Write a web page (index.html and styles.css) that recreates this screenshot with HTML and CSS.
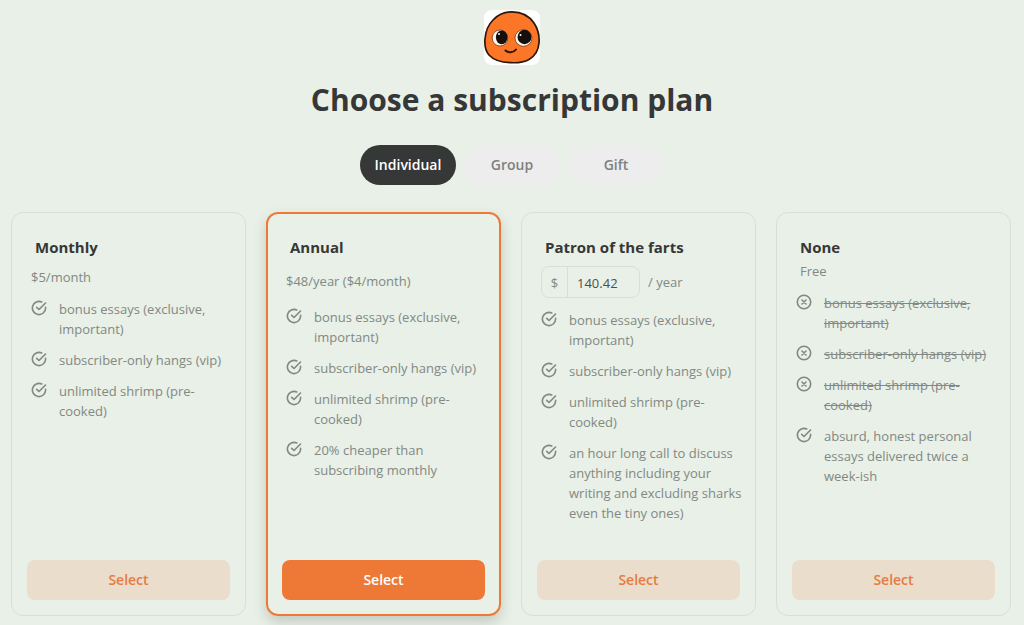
FILE: index.html
```
<!DOCTYPE html>
<html lang="en">
<head>
<meta charset="utf-8">
<meta name="viewport" content="width=device-width, initial-scale=1">
<title>Choose a subscription plan</title>
<link rel="stylesheet" href="styles.css">
</head>
<body>
<svg width="0" height="0" class="sprite" aria-hidden="true">
  <symbol id="check" viewBox="0 0 16 16"><path d="M14.600 7.300V8A6.600 6.600 0 1 1 10.800 2M14.500 3 8 9.500 5.700 7.300"/></symbol>
  <symbol id="cross" viewBox="0 0 16 16"><circle cx="8" cy="8" r="6.700"/><path d="M6 6 10 10M10 6 6 10"/></symbol>
</svg>
<header class="header">
  <svg class="logo" viewBox="0 0 56 56" role="img" aria-label="Smiling orange face">
    <rect width="56" height="55" rx="8" fill="#fff"/>
    <path d="M28 1.800C37 1.800 45 5.500 50 13C54 19 55.500 27 55 33C54.500 40 51 46 45 49.500C40 52.300 33 53 27 52.700C18 52.500 10 50.500 5 45C1.500 41 0.500 35 1 29C1.500 22 4 15 9 10C14 4.500 21 1.800 28 1.800Z" fill="#fc7628" stroke="#2b180c" stroke-width="1.700"/>
    <ellipse cx="16" cy="28" rx="7.800" ry="8" fill="#fff5e8" stroke="#5c3015" stroke-width=".7"/>
    <ellipse cx="17.700" cy="27.300" rx="5.800" ry="6.900" fill="#160f0b"/>
    <ellipse cx="39.500" cy="28" rx="8.500" ry="8.300" fill="#fff5e8" stroke="#5c3015" stroke-width=".7"/>
    <ellipse cx="40.500" cy="27" rx="7" ry="7.200" fill="#160f0b"/>
    <circle cx="15" cy="24" r="1" fill="#fff"/>
    <circle cx="36.500" cy="25" r="1" fill="#fff"/>
    <path d="M21.500 40.500C24 43 29.500 43 32 39.500" fill="none" stroke="#2b180c" stroke-width="2" stroke-linecap="round"/>
  </svg>
  <h1 class="heading">Choose a subscription plan</h1>
  <nav class="tabs" aria-label="Plan type">
    <button class="tab tab-active" type="button" aria-pressed="true">Individual</button>
    <button class="tab" type="button" aria-pressed="false">Group</button>
    <button class="tab" type="button" aria-pressed="false">Gift</button>
  </nav>
</header>
<main class="plans">
  <section class="plan">
    <h2 class="name">Monthly</h2>
    <p class="price">$5/month</p>
    <ul class="features">
      <li><svg class="icon"><use href="#check"/></svg><span>bonus essays (exclusive, important)</span></li>
      <li><svg class="icon"><use href="#check"/></svg><span>subscriber-only hangs (vip)</span></li>
      <li><svg class="icon"><use href="#check"/></svg><span>unlimited shrimp (pre-cooked)</span></li>
    </ul>
    <button class="select" type="button">Select</button>
  </section>
  <section class="plan plan-featured">
    <h2 class="name">Annual</h2>
    <p class="price price-roomy">$48/year ($4/month)</p>
    <ul class="features">
      <li><svg class="icon"><use href="#check"/></svg><span>bonus essays (exclusive, important)</span></li>
      <li><svg class="icon"><use href="#check"/></svg><span>subscriber-only hangs (vip)</span></li>
      <li><svg class="icon"><use href="#check"/></svg><span>unlimited shrimp (pre-cooked)</span></li>
      <li><svg class="icon"><use href="#check"/></svg><span>20% cheaper than subscribing monthly</span></li>
    </ul>
    <button class="select select-primary" type="button">Select</button>
  </section>
  <section class="plan">
    <h2 class="name">Patron of the farts</h2>
    <div class="price-entry">
      <div class="amount">
        <label class="currency" for="amount">$</label>
        <input class="amount-input" id="amount" type="text" inputmode="decimal" value="140.42">
      </div>
      <span>/ year</span>
    </div>
    <ul class="features">
      <li><svg class="icon"><use href="#check"/></svg><span>bonus essays (exclusive, important)</span></li>
      <li><svg class="icon"><use href="#check"/></svg><span>subscriber-only hangs (vip)</span></li>
      <li><svg class="icon"><use href="#check"/></svg><span>unlimited shrimp (pre-cooked)</span></li>
      <li><svg class="icon"><use href="#check"/></svg><span>an hour long call to discuss anything including your writing and excluding sharks even the tiny ones)</span></li>
    </ul>
    <button class="select" type="button">Select</button>
  </section>
  <section class="plan">
    <h2 class="name">None</h2>
    <p class="price price-free">Free</p>
    <ul class="features">
      <li><svg class="icon"><use href="#cross"/></svg><s>bonus essays (exclusive, important)</s></li>
      <li><svg class="icon"><use href="#cross"/></svg><s>subscriber-only hangs (vip)</s></li>
      <li><svg class="icon"><use href="#cross"/></svg><s>unlimited shrimp (pre-cooked)</s></li>
      <li><svg class="icon"><use href="#check"/></svg><span>absurd, honest personal essays delivered twice a week-ish</span></li>
    </ul>
    <button class="select" type="button">Select</button>
  </section>
</main>
</body>
</html>
```
FILE: styles.css
```
* { box-sizing: border-box; }

body {
  margin: 0;
  min-height: 100vh;
  display: flex;
  flex-direction: column;
  background: #e8f0e7;
  color: #838883;
  font: 13px/20px "Segoe UI", "Open Sans", sans-serif;
}

h1, h2, p, ul { margin: 0; padding: 0; }
button, input { font: inherit; }
.sprite { position: absolute; }

.header {
  display: flex;
  flex-direction: column;
  align-items: center;
  padding-top: 10px;
}

.logo { width: 56px; height: 56px; }

.heading {
  margin-top: 14px;
  color: #363737;
  font-size: 30px;
  line-height: 40px;
  font-weight: 700;
  text-align: center;
}

.tabs { display: flex; gap: 8px; margin-top: 25px; }

.tab {
  width: 96px;
  height: 40px;
  padding: 0;
  border: 0;
  border-radius: 20px;
  background: #ededed;
  color: #7f7f7f;
  font-size: 14px;
  font-weight: 600;
  cursor: pointer;
}

.tab-active { background: #363737; color: #fff; }

.plans {
  flex: 1;
  display: grid;
  grid-template-columns: repeat(auto-fit, minmax(220px, 1fr));
  gap: 20px;
  padding: 27px 13px 9px 11px;
}

.plan {
  display: flex;
  flex-direction: column;
  padding: 24px 15px 15px;
  border: 1px solid #d9dfd8;
  border-radius: 12px;
}

.plan-featured {
  padding: 23px 14px 14px;
  border: 2px solid #ee7937;
  box-shadow: 0 6px 14px rgba(0, 0, 0, 0.16);
}

.name {
  padding: 0 8px;
  color: #363737;
  font-size: 15px;
  line-height: 20px;
  font-weight: 700;
}

.price { padding: 0 4px; margin: 10px 0 12px; }
.price-roomy { margin: 14px 0 16px; }
.price-free { padding: 0 8px; margin: 4px 0 12px; }

.price-entry {
  display: flex;
  align-items: center;
  gap: 8px;
  margin: 9px 0 12px;
  padding: 0 4px;
}

.amount {
  display: flex;
  width: 99px;
  height: 32px;
  border: 1px solid #d9dfd8;
  border-radius: 8px;
}

.currency {
  width: 26px;
  border-right: 1px solid #d9dfd8;
  line-height: 32px;
  text-align: center;
}

.amount-input {
  flex: 1;
  min-width: 0;
  padding: 2px 0 0 9px;
  border: 0;
  background: transparent;
  color: #4c504c;
}

.features {
  display: grid;
  gap: 11px;
  padding: 0 0 0 4px;
  margin: 0 -8px 16px 0;
  list-style: none;
}

.features li { display: flex; gap: 12px; }

.icon {
  flex: none;
  width: 16px;
  height: 16px;
  margin-top: 1px;
  fill: none;
  stroke: #838883;
  stroke-width: 1.6;
  stroke-linecap: round;
  stroke-linejoin: round;
}

.select {
  height: 40px;
  margin-top: auto;
  border: 0;
  border-radius: 8px;
  background: #eaddcb;
  color: #e67b43;
  font-size: 14px;
  font-weight: 600;
  cursor: pointer;
}

.select-primary { background: #ee7937; color: #fff; }
```
